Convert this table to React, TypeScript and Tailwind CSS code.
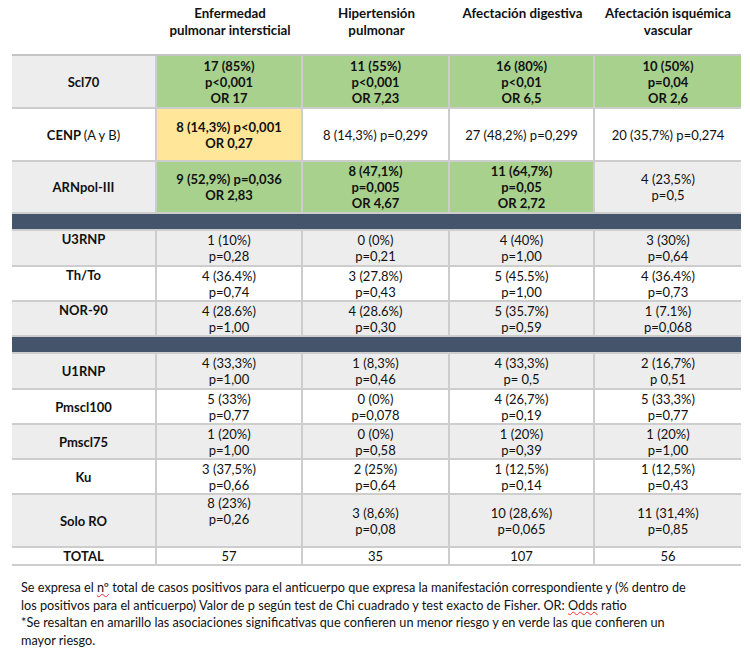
import type { ReactNode } from "react";

type Cell = {
  lines: ReactNode[];
  bold?: boolean;
  bg?: "green" | "yellow";
  top?: boolean;
};

type Row = {
  label: ReactNode;
  gray: boolean;
  h: string;
  labelTop?: boolean;
  cells: Cell[];
};

const heads = [
  ["Enfermedad", "pulmonar intersticial"],
  ["Hipertensión", "pulmonar"],
  ["Afectación digestiva"],
  ["Afectación isquémica", "vascular"],
];

const c = (lines: ReactNode[], extra: Partial<Cell> = {}): Cell => ({ lines, ...extra });
const g = (lines: ReactNode[]): Cell => ({ lines, bold: true, bg: "green" });

const block1: Row[] = [
  {
    label: "Scl70",
    gray: true,
    h: "h-[53px]",
    cells: [
      g(["17 (85%)", "p<0,001", "OR 17"]),
      g(["11 (55%)", "p<0,001", "OR 7,23"]),
      g(["16 (80%)", "p<0,01", "OR 6,5"]),
      g(["10 (50%)", "p=0,04", "OR 2,6"]),
    ],
  },
  {
    label: (
      <span>
        CENP <span className="font-normal">(A y B)</span>
      </span>
    ),
    gray: false,
    h: "h-[53px]",
    cells: [
      c(["8 (14,3%) p<0,001", "OR 0,27"], { bold: true, bg: "yellow" }),
      c(["8 (14,3%) p=0,299"]),
      c(["27 (48,2%) p=0,299"]),
      c(["20 (35,7%) p=0,274"]),
    ],
  },
  {
    label: "ARNpol-III",
    gray: true,
    h: "h-[52px]",
    cells: [
      g(["9 (52,9%) p=0,036", "OR 2,83"]),
      g(["8 (47,1%)", "p=0,005", "OR 4,67"]),
      g(["11 (64,7%)", "p=0,05", "OR 2,72"]),
      c(["4 (23,5%)", "p=0,5"]),
    ],
  },
];

const block2: Row[] = [
  {
    label: "U3RNP",
    gray: true,
    h: "h-[36px]",
    labelTop: true,
    cells: [
      c(["1 (10%)", "p=0,28"]),
      c(["0 (0%)", "p=0,21"]),
      c(["4 (40%)", "p=1,00"]),
      c(["3 (30%)", "p=0,64"]),
    ],
  },
  {
    label: "Th/To",
    gray: false,
    h: "h-[35px]",
    labelTop: true,
    cells: [
      c(["4 (36.4%)", "p=0,74"]),
      c(["3 (27.8%)", "p=0,43"]),
      c(["5 (45.5%)", "p=1,00"]),
      c(["4 (36.4%)", "p=0,73"]),
    ],
  },
  {
    label: "NOR-90",
    gray: true,
    h: "h-[35px]",
    labelTop: true,
    cells: [
      c(["4 (28.6%)", "p=1,00"]),
      c(["4 (28.6%)", "p=0,30"]),
      c(["5 (35.7%)", "p=0,59"]),
      c(["1 (7.1%)", "p=0,068"]),
    ],
  },
];

const block3: Row[] = [
  {
    label: "U1RNP",
    gray: true,
    h: "h-[36px]",
    cells: [
      c(["4 (33,3%)", "p=1,00"]),
      c(["1 (8,3%)", "p=0,46"]),
      c(["4 (33,3%)", "p= 0,5"]),
      c(["2 (16,7%)", "p 0,51"]),
    ],
  },
  {
    label: "Pmscl100",
    gray: false,
    h: "h-[35px]",
    cells: [
      c(["5 (33%)", "p=0,77"]),
      c(["0 (0%)", "p=0,078"]),
      c(["4 (26,7%)", "p=0,19"]),
      c(["5 (33,3%)", "p=0,77"]),
    ],
  },
  {
    label: "Pmscl75",
    gray: true,
    h: "h-[35px]",
    cells: [
      c(["1 (20%)", "p=1,00"]),
      c(["0 (0%)", "p=0,58"]),
      c(["1 (20%)", "p=0,39"]),
      c(["1 (20%)", "p=1,00"]),
    ],
  },
  {
    label: "Ku",
    gray: false,
    h: "h-[35px]",
    cells: [
      c(["3 (37,5%)", "p=0,66"]),
      c(["2 (25%)", "p=0,64"]),
      c(["1 (12,5%)", "p=0,14"]),
      c(["1 (12,5%)", "p=0,43"]),
    ],
  },
  {
    label: "Solo RO",
    gray: true,
    h: "h-[53px]",
    cells: [
      c(["8 (23%)", "p=0,26"], { top: true }),
      c(["3 (8,6%)", "p=0,08"]),
      c(["10 (28,6%)", "p=0,065"]),
      c(["11 (31,4%)", "p=0,85"]),
    ],
  },
  {
    label: "TOTAL",
    gray: false,
    h: "h-[18px]",
    cells: [c(["57"]), c(["35"]), c(["107"]), c(["56"])],
  },
];

const cols = "grid grid-cols-[145px_146px_147px_145px_146px]";

function TableRow({ row }: { row: Row }) {
  const base = row.gray ? "bg-[#ededed]" : "bg-white";
  return (
    <div className={`${cols} ${row.h} border-b-2 border-[#cdcdcd]`}>
      <div
        className={`flex ${row.labelTop ? "items-start" : "items-center"} justify-center border-r-2 border-[#cdcdcd] font-bold ${base}`}
      >
        {row.label}
      </div>
      {row.cells.map((cell, i) => {
        const bg =
          cell.bg === "green" ? "bg-[#a9d18e]" : cell.bg === "yellow" ? "bg-[#ffe699]" : base;
        return (
          <div
            key={i}
            className={`flex flex-col ${cell.top ? "justify-start" : "justify-center"} items-center text-center ${
              i < 3 ? "border-r-2 border-[#cdcdcd]" : ""
            } ${cell.bold ? "font-bold" : ""} ${bg}`}
          >
            {cell.lines.map((l, k) => (
              <div key={k}>{l}</div>
            ))}
          </div>
        );
      })}
    </div>
  );
}

function Band() {
  return <div className="h-[17px] bg-[#44546a] border-b-2 border-[#cdcdcd]" />;
}

export default function App() {
  return (
    <div className="w-[750px] h-[651px] bg-white text-[#111] font-['Lato',_sans-serif] text-[13px] leading-[16px] overflow-hidden">
      <div className="ml-[12px] w-[729px]">
        {/* header */}
        <div className={`${cols} h-[54px] pt-[5px] font-bold text-[13.3px] leading-[17px]`}>
          <div />
          {heads.map((h, i) => (
            <div key={i} className="text-center">
              {h.map((t) => (
                <div key={t}>{t}</div>
              ))}
            </div>
          ))}
        </div>
        <div className="border-t-2 border-[#c4c4c4]">
          {block1.map((r, i) => (
            <TableRow key={i} row={r} />
          ))}
          <Band />
          {block2.map((r, i) => (
            <TableRow key={i} row={r} />
          ))}
          <Band />
          {block3.map((r, i) => (
            <TableRow key={i} row={r} />
          ))}
        </div>
      </div>
      <p className="ml-[21px] mt-[13px] text-[12.7px] leading-[17.5px]">
        Se expresa el{" "}
        <span className="underline decoration-wavy decoration-red-500 decoration-1">nº</span> total de casos
        positivos para el anticuerpo que expresa la manifestación correspondiente y (% dentro de
        <br />
        los positivos para el anticuerpo) Valor de p según test de Chi cuadrado y test exacto de Fisher. OR:{" "}
        <span className="underline decoration-wavy decoration-red-500 decoration-1">Odds</span> ratio
        <br />
        *Se resaltan en amarillo las asociaciones significativas que confieren un menor riesgo y en verde las que
        confieren un
        <br />
        mayor riesgo.
      </p>
    </div>
  );
}
